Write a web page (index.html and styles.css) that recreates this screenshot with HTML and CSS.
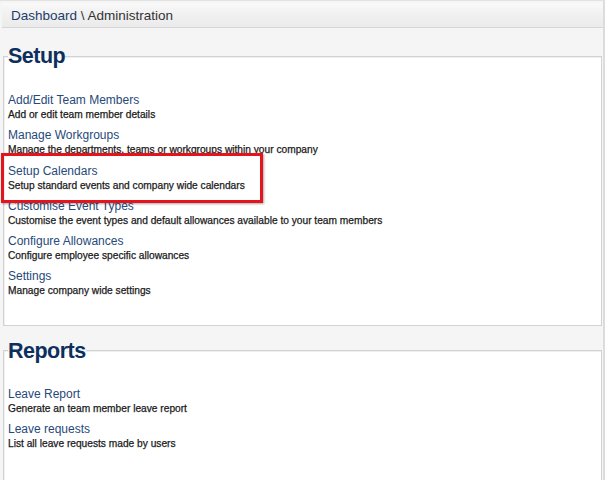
FILE: index.html
```html
<!DOCTYPE html>
<html lang="en">
<head>
    <meta charset="UTF-8">
    <meta name="viewport" content="width=device-width, initial-scale=1.0">
    <title>Administration</title>
    <link rel="stylesheet" href="styles.css">
</head>
<body>
    <div class="page">
        <div class="crumbs">
            <a href="#">Dashboard</a> \ Administration
        </div>

        <fieldset class="panel">
            <legend>Setup</legend>
            <ul class="tasks">
                <li><a href="#">Add/Edit Team Members</a><p>Add or edit team member details</p></li>
                <li><a href="#">Manage Workgroups</a><p>Manage the departments, teams or workgroups within your company</p></li>
                <li><a href="#">Setup Calendars</a><p>Setup standard events and company wide calendars</p></li>
                <li><a href="#">Customise Event Types</a><p>Customise the event types and default allowances available to your team members</p></li>
                <li><a href="#">Configure Allowances</a><p>Configure employee specific allowances</p></li>
                <li><a href="#">Settings</a><p>Manage company wide settings</p></li>
            </ul>
        </fieldset>

        <fieldset class="panel">
            <legend>Reports</legend>
            <ul class="tasks">
                <li><a href="#">Leave Report</a><p>Generate an team member leave report</p></li>
                <li><a href="#">Leave requests</a><p>List all leave requests made by users</p></li>
            </ul>
        </fieldset>
    </div>
    <!-- annotation box drawn over the screenshot -->
    <div class="callout"></div>
</body>
</html>
```

FILE: styles.css
```css
body {
    margin: 0;
    font-family: "Liberation Sans", Arial, sans-serif;
    background-color: #fff;
}
.page {
    width: 605px;
    min-height: 480px;
    padding-top: 2px;
    background-color: #f5f5f5;
    border-top: 1px solid #e2e2e2;
    border-right: 2px solid #dcdcdc;
    box-sizing: border-box;
}
.crumbs {
    height: 24px;
    margin-left: 2px;
    padding-left: 9px;
    line-height: 25px;
    font-size: 13.5px;
    color: #333;
    background: linear-gradient(#f9f9f9, #f1f1f1 45%, #ebebeb);
    border-bottom: 1px solid #d6d6d6;
}
.crumbs a {
    color: #1d3d6b;
    text-decoration: none;
}
.panel {
    margin: 15px 1px 0 3px;
    padding: 24px 4px 20px 4px;
    background-color: #fff;
    border: 1px solid #d2d2d2;
    box-shadow: inset 1px 1px 0 #efefef;
}
.panel + .panel {
    margin-top: 12px;
    padding-top: 23px;
    padding-bottom: 40px;
}
.panel legend {
    padding: 0;
    font-size: 21.5px;
    line-height: 26px;
    font-weight: bold;
    letter-spacing: -0.5px;
    color: #0d2f5e;
}
.tasks {
    list-style: none;
    margin: 0;
    padding: 0;
}
.tasks li {
    margin-bottom: 6.3px;
}
.tasks a {
    display: block;
    font-size: 12px;
    line-height: 15px;
    color: #27497a;
    text-decoration: none;
}
.tasks p {
    margin: 0;
    font-size: 10.2px;
    line-height: 14px;
    color: #1a1a1a;
    -webkit-text-stroke: 0.25px #1a1a1a;
}
.callout {
    position: absolute;
    left: 1px;
    top: 153px;
    width: 256px;
    height: 44px;
    border: 3px solid #e5131b;
    box-shadow: 1px 1px 2px rgba(0, 0, 0, 0.35);
}
```
